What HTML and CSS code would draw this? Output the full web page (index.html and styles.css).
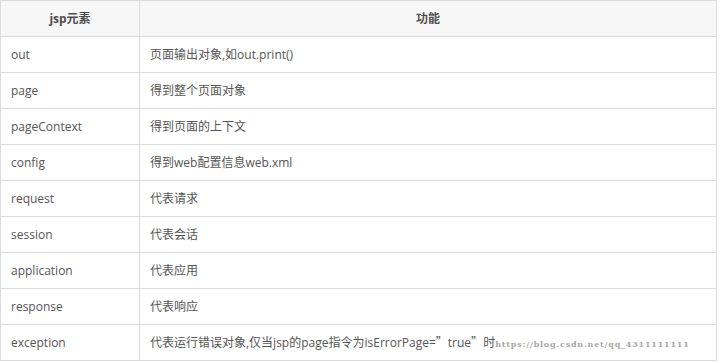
FILE: index.html
```html
<!DOCTYPE html>
<html lang="zh">
<head>
<meta charset="utf-8">
<link rel="stylesheet" href="styles.css">
</head>
<body>
<table class="tbl">
  <thead>
    <tr><th class="c1">jsp元素</th><th class="c2">功能</th></tr>
  </thead>
  <tbody>
    <tr><td>out</td><td>页面输出对象,如out.print()</td></tr>
    <tr><td>page</td><td>得到整个页面对象</td></tr>
    <tr><td>pageContext</td><td>得到页面的上下文</td></tr>
    <tr><td>config</td><td>得到web配置信息web.xml</td></tr>
    <tr><td>request</td><td>代表请求</td></tr>
    <tr><td>session</td><td>代表会话</td></tr>
    <tr><td>application</td><td>代表应用</td></tr>
    <tr><td>response</td><td>代表响应</td></tr>
    <tr><td>exception</td><td>代表运行错误对象,仅当jsp的page指令为isErrorPage=<span class="q">”</span>true<span class="q">”</span>时<span class="wm">https://blog.csdn.net/qq_4311111111</span></td></tr>
  </tbody>
</table>
</body>
</html>
```
FILE: styles.css
```css
html, body {
  margin: 0;
  padding: 0;
  background: #fff;
}
.tbl {
  border-collapse: collapse;
  width: 717px;
  table-layout: fixed;
  font-family: "Open Sans", "Noto Sans CJK SC", sans-serif;
  font-size: 12px;
  color: #555;
}
.tbl th, .tbl td {
  border: 1px solid #dcdcdc;
  height: 36px;
  padding: 0 10px;
  box-sizing: border-box;
  line-height: 20px;
  white-space: nowrap;
  overflow: hidden;
}
.tbl th {
  background: #f7f7f7;
  font-weight: bold;
  color: #4d4d4d;
  text-align: center;
}
.tbl .c1 {
  width: 139px;
}
.tbl td {
  text-align: left;
}
.q {
  font-family: "Noto Sans CJK SC", sans-serif;
}
.wm {
  font-size: 8px;
  color: #8a8a8a;
  letter-spacing: 0.8px;
  opacity: 0.75;
  font-family: "DejaVu Serif", serif;
  font-weight: bold;
}
```
